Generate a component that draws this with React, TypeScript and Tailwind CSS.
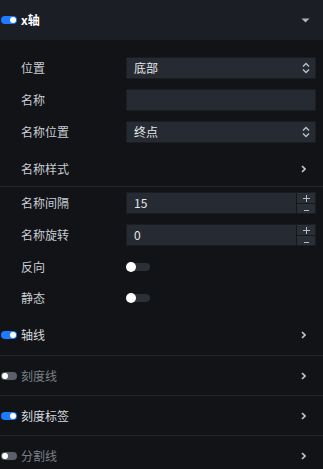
import React from 'react';

const font = { fontFamily: '"Noto Sans CJK SC", "Noto Sans", sans-serif' };

const Toggle: React.FC<{ on: boolean }> = ({ on }) => (
  <span className={`relative inline-block w-[16px] h-[8px] rounded-full ${on ? 'bg-[#1e7bff]' : 'bg-[#5c6068]'}`}>
    <span className={`absolute top-[1px] w-[6px] h-[6px] rounded-full bg-white ${on ? 'right-[1px]' : 'left-[1px]'}`} />
  </span>
);

const Switch: React.FC = () => (
  <span className="relative flex items-center w-[24px] h-[10px]">
    <span className="absolute left-[2px] right-0 h-[8px] rounded-full bg-[#2b2f36]" />
    <span className="relative w-[10px] h-[10px] rounded-full bg-white" />
  </span>
);

const ChevronRight: React.FC = () => (
  <svg width="5" height="8" viewBox="0 0 5 8" className="text-[#c3c7cd]">
    <path d="M1 1 L4 4 L1 7" fill="none" stroke="currentColor" strokeWidth="1.6" />
  </svg>
);

const UpDown: React.FC = () => (
  <svg width="8" height="12" viewBox="0 0 8 12" className="text-[#b8bcc3]">
    <path d="M1 4.5 L4 1.5 L7 4.5" fill="none" stroke="currentColor" strokeWidth="1.5" />
    <path d="M1 7.5 L4 10.5 L7 7.5" fill="none" stroke="currentColor" strokeWidth="1.5" />
  </svg>
);

const Plus: React.FC = () => (
  <svg width="7" height="7" viewBox="0 0 7 7" className="text-[#b8bcc3]">
    <path d="M3.5 0 V7 M0 3.5 H7" stroke="currentColor" strokeWidth="1" />
  </svg>
);

const Minus: React.FC = () => (
  <svg width="5" height="3" viewBox="0 0 5 3" className="text-[#b8bcc3] mt-[3px]">
    <path d="M0 1.5 H5" stroke="currentColor" strokeWidth="1" />
  </svg>
);

const Row: React.FC<{ label: string; children?: React.ReactNode; className?: string }> = ({ label, children, className }) => (
  <div className={`flex items-center h-[22px] ${className ?? ''}`}>
    <span className="w-[105px] pl-[21px] box-content text-[12px] text-[#c9cdd3]">{label}</span>
    <div className="flex-1 flex items-center">{children}</div>
  </div>
);

const Select: React.FC<{ value: string }> = ({ value }) => (
  <div className="flex items-center justify-between w-[190px] h-[22px] bg-[#262a32] border border-[#1a1d22] pl-[7px] pr-[5px]">
    <span className="text-[12px] text-[#e4e7eb]">{value}</span>
    <UpDown />
  </div>
);

const NumberInput: React.FC<{ value: string }> = ({ value }) => (
  <div className="flex w-[190px] h-[22px] border border-[#1a1d22]">
    <div className="flex-1 bg-[#262a32] pl-[7px] flex items-center text-[12px] text-[#e4e7eb]">{value}</div>
    <div className="w-[19px] flex flex-col border-l border-[#15171b]">
      <span className="h-[10px] bg-[#2a2e36] flex items-center justify-center"><Plus /></span>
      <span className="h-[10px] bg-[#2a2e36] border-t border-[#15171b] flex items-center justify-center"><Minus /></span>
    </div>
  </div>
);

const Section: React.FC<{ label: string; on: boolean; border?: boolean }> = ({ label, on, border }) => (
  <div className={`flex items-center h-[40px] pr-[17px] ${border ? 'border-t border-[#23262c]' : ''}`}>
    <span className="w-[21px] pl-[1px] flex items-center"><Toggle on={on} /></span>
    <span className={`flex-1 text-[12px] ${on ? 'text-[#d6d9de]' : 'text-[#7c8087]'}`}>{label}</span>
    <ChevronRight />
  </div>
);

export default function App() {
  return (
    <div className="w-[323px] h-[469px] overflow-hidden bg-[#111317]" style={font}>
      <div className="flex items-center h-[40px] bg-[#1b1e25] pr-[13px]">
        <span className="w-[21px] pl-[1px] flex items-center"><Toggle on /></span>
        <span className="flex-1 text-[12px] font-bold text-white">x轴</span>
        <svg width="9" height="5" viewBox="0 0 9 5" className="text-[#aeb2b9]">
          <path d="M0.5 0.5 L4.5 4.5 L8.5 0.5 Z" fill="currentColor" />
        </svg>
      </div>

      <div className="pt-[17px] pr-[7px]">
        <Row label="位置"><Select value="底部" /></Row>
        <Row label="名称" className="mt-[10px]">
          <div className="w-[190px] h-[22px] bg-[#262a32] border border-[#1a1d22]" />
        </Row>
        <Row label="名称位置" className="mt-[10px]"><Select value="终点" /></Row>
        <div className="flex items-center h-[32px] mt-[10px] pr-[10px]">
          <span className="flex-1 pl-[21px] text-[12px] text-[#c9cdd3]">名称样式</span>
          <ChevronRight />
        </div>
      </div>

      <div className="border-t border-[#23262c] mt-[1px] pt-[5px] pr-[7px]">
        <Row label="名称间隔"><NumberInput value="15" /></Row>
        <Row label="名称旋转" className="mt-[10px]"><NumberInput value="0" /></Row>
        <Row label="反向" className="mt-[10px]"><Switch /></Row>
        <Row label="静态" className="mt-[9px]"><Switch /></Row>
      </div>

      <div className="mt-[6px]">
        <Section label="轴线" on />
        <Section label="刻度线" on={false} border />
        <Section label="刻度标签" on border />
        <Section label="分割线" on={false} border />
      </div>
    </div>
  );
}
